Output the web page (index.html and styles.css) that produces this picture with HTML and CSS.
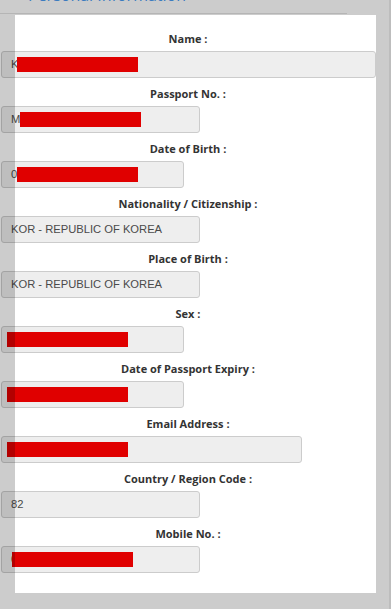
FILE: index.html
```html
<!DOCTYPE html>
<html lang="en">
<head>
    <meta charset="UTF-8">
    <meta name="viewport" content="width=device-width, initial-scale=1.0">
    <title>Personal Information</title>
    <link rel="stylesheet" href="styles.css">
</head>
<body>
    <div class="section-head">
        <h2>Personal Information</h2>
    </div>
    <div class="panel">
        <div class="form-group">
            <label>Name :</label>
            <div class="field w-full">K<span class="redact r-name"></span></div>
        </div>
        <div class="form-group">
            <label>Passport No. :</label>
            <div class="field w-md">M<span class="redact r-pass"></span></div>
        </div>
        <div class="form-group">
            <label>Date of Birth :</label>
            <div class="field w-sm">0<span class="redact r-name"></span></div>
        </div>
        <div class="form-group">
            <label>Nationality / Citizenship :</label>
            <div class="field w-md">KOR - REPUBLIC OF KOREA</div>
        </div>
        <div class="form-group">
            <label>Place of Birth :</label>
            <div class="field w-md">KOR - REPUBLIC OF KOREA</div>
        </div>
        <div class="form-group">
            <label>Sex :</label>
            <div class="field w-sm"><span class="redact r-left"></span></div>
        </div>
        <div class="form-group">
            <label>Date of Passport Expiry :</label>
            <div class="field w-sm"><span class="redact r-left"></span></div>
        </div>
        <div class="form-group">
            <label>Email Address :</label>
            <div class="field w-lg"><span class="redact r-left"></span></div>
        </div>
        <div class="form-group">
            <label>Country / Region Code :</label>
            <div class="field w-md">82</div>
        </div>
        <div class="form-group">
            <label>Mobile No. :</label>
            <div class="field w-md">0<span class="redact r-mobile"></span></div>
        </div>
    </div>
</body>
</html>
```

FILE: styles.css
```css
html, body {
    margin: 0;
    padding: 0;
}
body {
    background-color: #cccccc;
    min-height: 100vh;
    box-sizing: border-box;
    border-right: 2px solid #bdbdbd;
    font-family: "Open Sans", Arial, sans-serif;
}
.section-head {
    height: 13px;
    margin-right: 42px;
    padding-left: 28px;
    border-bottom: 1px solid #b5b5b5;
    overflow: hidden;
}
.section-head h2 {
    margin: -15px 0 0;
    font-size: 16px;
    line-height: 20px;
    font-weight: normal;
    color: #3b7bbf;
}
.panel {
    position: relative;
    width: 376px;
    margin-top: 1px;
    padding: 16px 0 12px;
    background-color: #fff;
}
.panel::before {
    content: "";
    position: absolute;
    left: 0;
    top: 0;
    bottom: 0;
    width: 15px;
    background-color: rgba(0, 0, 0, 0.2);
    z-index: 2;
}
.form-group {
    margin-bottom: 8px;
}
label {
    display: block;
    margin-bottom: 4px;
    text-align: center;
    font-size: 11px;
    line-height: 16px;
    font-weight: bold;
    color: #333;
}
.field {
    position: relative;
    box-sizing: border-box;
    height: 27px;
    margin-left: 1px;
    padding: 0 9px;
    border: 1px solid #ccc;
    border-radius: 3px;
    background-color: #eee;
    font-family: "Liberation Sans", Arial, sans-serif;
    font-size: 11.2px;
    line-height: 25px;
    color: #4a4a4a;
}
.w-full { width: 375px; }
.w-lg { width: 301px; }
.w-md { width: 199px; }
.w-sm { width: 183px; }
.redact {
    position: absolute;
    top: 5px;
    width: 121px;
    height: 15px;
    background-color: #e00000;
}
.r-name { left: 15px; }
.r-pass { left: 18px; }
.r-left { left: 5px; }
.r-mobile { left: 10px; }
```
